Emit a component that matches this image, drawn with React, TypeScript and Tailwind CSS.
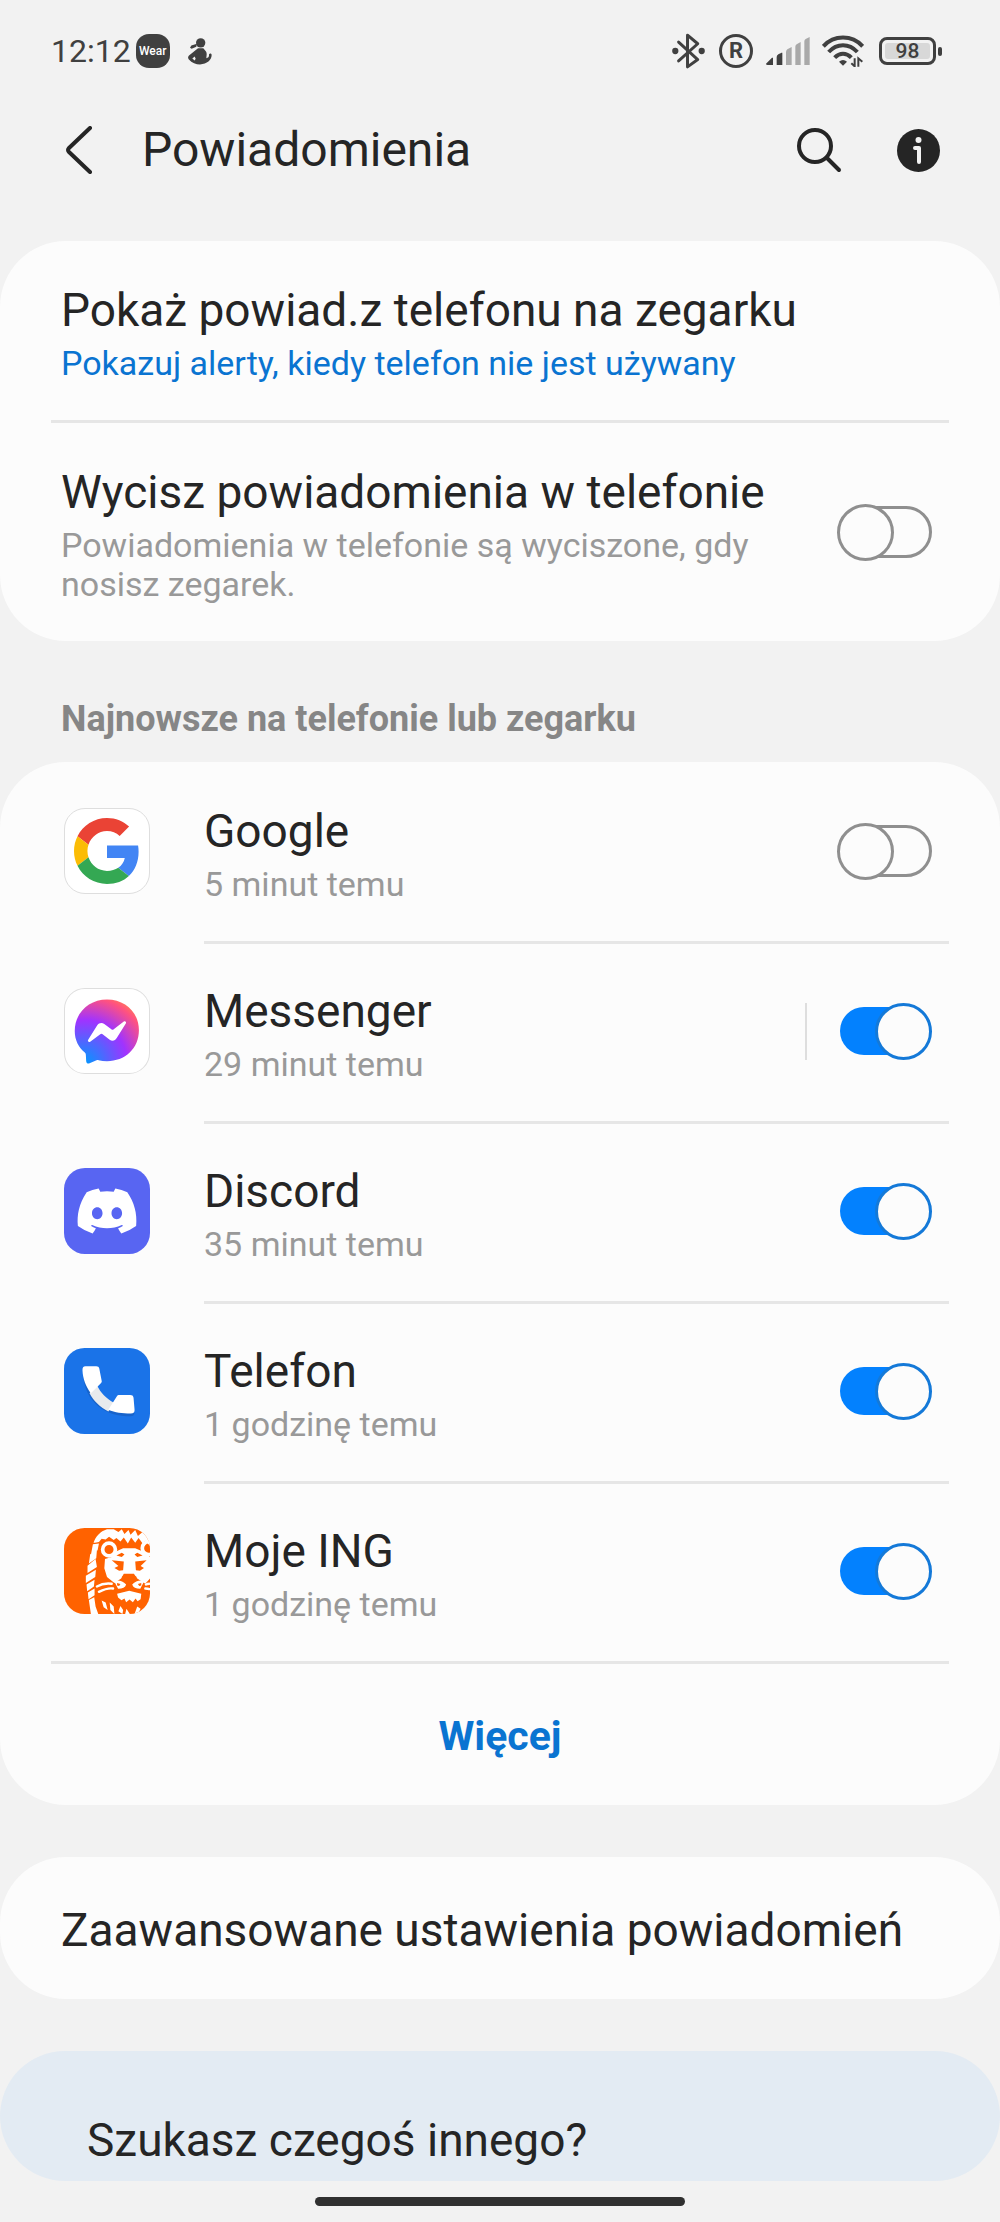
import type { ReactNode } from 'react';
import { FaDiscord } from 'react-icons/fa6';

type AppEntry = {
  name: string;
  time: string;
  icon: ReactNode;
  enabled: boolean;
  hasDetails?: boolean;
};

function GoogleIcon() {
  return (
    <span className="flex size-[86px] items-center justify-center rounded-[21px] border border-[#dedede] bg-white">
      <svg viewBox="0 0 48 48" className="size-[66px]" aria-hidden="true">
        <path fill="#ea4335" d="M24 9.5c3.54 0 6.71 1.22 9.21 3.6l6.85-6.85C35.9 2.38 30.47 0 24 0 14.62 0 6.51 5.38 2.56 13.22l7.98 6.19C12.43 13.72 17.74 9.5 24 9.5z" />
        <path fill="#4285f4" d="M46.98 24.55c0-1.57-.15-3.09-.38-4.55H24v9.02h12.94c-.58 2.96-2.26 5.48-4.78 7.18l7.73 6c4.51-4.18 7.09-10.36 7.09-17.65z" />
        <path fill="#fbbc05" d="M10.53 28.59c-.48-1.45-.76-2.99-.76-4.59s.27-3.14.76-4.59l-7.98-6.19C.92 16.46 0 20.12 0 24c0 3.88.92 7.54 2.56 10.78l7.97-6.19z" />
        <path fill="#34a853" d="M24 48c6.48 0 11.93-2.13 15.89-5.81l-7.73-6c-2.15 1.45-4.92 2.3-8.16 2.3-6.26 0-11.57-4.22-13.47-9.91l-7.98 6.19C6.51 42.62 14.62 48 24 48z" />
      </svg>
    </span>
  );
}

function MessengerIcon() {
  return (
    <svg viewBox="0 0 256 256" className="size-[86px]" aria-hidden="true">
      <defs>
        <radialGradient id="messenger" cx="60" cy="224" r="215" gradientUnits="userSpaceOnUse">
          <stop offset="0" stopColor="#0099ff" />
          <stop offset="0.6" stopColor="#a033ff" />
          <stop offset="0.92" stopColor="#ff5280" />
          <stop offset="1" stopColor="#ff7061" />
        </radialGradient>
      </defs>
      <rect x="1.5" y="1.5" width="253" height="253" rx="61" fill="#fff" stroke="#dedede" strokeWidth="3" />
      <path
        fill="url(#messenger)"
        d="M128 34C74 34 32 74 32 128c0 27 11 48 30 64 2 2 3 4 3 7l1 18c0 6 5 9 10 7l21-9c2-1 4-1 6 0 8 2 16 3 25 3 54 0 95-38 95-92S182 34 128 34z"
      />
      <path
        fill="#fff"
        d="M72 154l27-43c5-8 14-9 21-4l21 16c2 2 5 2 7 0l30-23c4-3 9 2 6 6l-27 43c-4 8-14 10-21 5l-21-16c-2-2-5-2-7 0l-30 22c-4 3-9-2-6-6z"
      />
    </svg>
  );
}

function DiscordIcon() {
  return (
    <span className="flex size-[86px] items-center justify-center rounded-[21px] bg-[#5865f2] text-white">
      <FaDiscord className="size-[64px]" aria-hidden="true" />
    </span>
  );
}

function PhoneIcon() {
  return (
    <svg viewBox="0 0 256 256" className="size-[86px]" aria-hidden="true">
      <rect width="256" height="256" rx="61" fill="#1a73e8" />
      <path
        fill="#1558b8"
        opacity="0.6"
        d="M57 76c2 74 54 124 128 127h13c7 0 11-3 12-9l-70-14-50-50z"
      />
      <path fill="#e8eaed" d="M76 135l22-24c12 24 26 38 52 53l-18 25c-24-13-43-29-56-54z" />
      <path fill="#fff" d="M64 54h32c5 0 8 2 9 7l7 36c1 4 0 6-3 9l-29 29c-15-21-24-43-25-69 0-8 2-12 9-12z" />
      <path fill="#fff" d="M132 184l25-40c2-3 4-4 8-4h32c6 0 9 2 10 8l3 35c1 8-3 12-11 12-26 0-47-2-67-11z" />
    </svg>
  );
}

function LionIcon() {
  return (
    <svg viewBox="0 0 256 256" className="size-[86px]" aria-hidden="true">
      <defs>
        <clipPath id="lion-tile">
          <rect width="256" height="256" rx="61" />
        </clipPath>
      </defs>
      <g clipPath="url(#lion-tile)">
        <rect width="256" height="256" fill="#ff6200" />
        {/* crown of the mane */}
        <path
          fill="#fff"
          d="M88 44c6-18 20-34 40-40l20 0 14 8 10-8 8 14 12-12 6 14 14-14 8 18 14-12c10 8 18 18 24 32v12l-16-18-8 8-12-16-10 14-12-16-10 18-12-18-10 12-12-10-8 6-14-10-10 8-12-2-8 10-12 2z"
        />
        {/* locks down the left side */}
        <path
          fill="#fff"
          d="M86 48l18-2-4 20-20 14zM78 78l20-12-2 24-22 16zM70 112l24-20 4 24-28 18zM65 142l30-18-2 22-28 18zM67 168l24-14-2 20-20 14zM71 192l20-12v20l-18 12zM74 214l16-8 4 28 8 22H80z"
        />
        {/* ears */}
        <circle cx="134" cy="64" r="19" fill="none" stroke="#fff" strokeWidth="11" />
        <circle cx="252" cy="60" r="19" fill="none" stroke="#fff" strokeWidth="11" />
        {/* face */}
        <path
          fill="#fff"
          d="M122 92l20-6 8-14 26-12h36l28 12 16 14v64l-14 16-24-16-10-14h-30l-8 14-20 14-22-18-8-26z"
        />
        <g fill="#ff6200">
          <path d="M142 96l36 4-2 26-12 1-14-8 12-6zM246 96l-34 4 2 26 12 1 12-8-10-6z" />
          <path d="M156 82l16-8 8 5-8 7zM234 82l-16-8-8 5 8 7z" />
          <path d="M172 145q22-12 44 0-2 14-16 20l-2 18h-8l-2-18q-14-6-16-20z" />
        </g>
        {/* muzzle and beard */}
        <path fill="#fff" d="M149 158q20-6 36 10-4 13-24 13zM239 158q-20-6-36 10 4 13 24 13z" />
        <path fill="#ff6200" d="M158 164l10 3-4 6-6-2zM230 164l-10 3 4 6 6-2z" />
        <path fill="#fff" d="M158 196l36-9 36 9-2 16-9 6-6-8-8 11-10-8-10 8-5-11-9 5-10-8z" />
        <g fill="none" stroke="#fff" strokeWidth="7" strokeLinecap="round">
          <path d="M98 174c14-8 28-10 44-8M104 190c16-8 28-12 42-10M254 166c-4 0-6 0-10 2M254 182c-4-2-8-2-12-2" />
        </g>
        <path fill="#fff" d="M112 216l12 6 6 22-12-8zM136 222l12 12 2 22-12-12zM168 232l8 12-2 12-12-8zM186 240l10 16h-14zM218 234l10 6-8 16h-10z" />
      </g>
    </svg>
  );
}

const APPS: AppEntry[] = [
  { name: 'Google', time: '5 minut temu', icon: <GoogleIcon />, enabled: false },
  { name: 'Messenger', time: '29 minut temu', icon: <MessengerIcon />, enabled: true, hasDetails: true },
  { name: 'Discord', time: '35 minut temu', icon: <DiscordIcon />, enabled: true },
  { name: 'Telefon', time: '1 godzinę temu', icon: <PhoneIcon />, enabled: true },
  { name: 'Moje ING', time: '1 godzinę temu', icon: <LionIcon />, enabled: true },
];

function Toggle({ label, on = false }: { label: string; on?: boolean }) {
  return (
    <label className="grid w-[95px] shrink-0 cursor-pointer items-center">
      <input type="checkbox" role="switch" aria-label={label} defaultChecked={on} className="peer col-start-1 row-start-1 h-[57px] w-full appearance-none" />
      <span className="col-start-1 row-start-1 ml-[3px] h-[52px] rounded-full border-3 border-[#8f8f8f] peer-checked:mr-1 peer-checked:h-[48px] peer-checked:border-0 peer-checked:bg-[#0381fe]" />
      <span className="col-start-1 row-start-1 size-[57px] rounded-full border-3 border-[#8f8f8f] bg-[#fcfcfc] peer-checked:justify-self-end peer-checked:border-[#1479d8]" />
    </label>
  );
}

function StatusBar() {
  return (
    <div className="flex h-[102px] items-center pr-[58px] pl-[51px] text-[#404040]">
      <span className="text-[32px] leading-10">12:12</span>
      <span className="ml-[5px] flex size-[34px] items-center justify-center rounded-[13px] bg-[#404040] text-[12px] font-medium text-white">
        Wear
      </span>
      <svg viewBox="0 0 72 80" className="ml-[18px] h-[27px] w-[24px]" fill="currentColor" aria-hidden="true">
        <circle cx="38" cy="14" r="14" />
        <path d="M27 17l-17 5-4 7 5 3 14-6zM30 30h16l8 10c4 6 1 14 1 20 6-1 9-5 8-12 3-3 7-2 8 2 0 16-14 28-35 29-12 0-24-5-34-16-3-4-2-8 1-11zM20 55l-7 6 7 6 3-5z" fillRule="evenodd" />
      </svg>

      <div className="ml-auto flex items-center">
        <svg viewBox="0 0 100 108" className="h-[36px] w-[33px]" fill="none" stroke="currentColor" strokeWidth="9" strokeLinejoin="round" strokeLinecap="round" aria-hidden="true">
          <path d="M20 27l58 53-31 22V6l31 26-58 52" />
          <circle cx="10" cy="54" r="5" fill="currentColor" />
          <circle cx="90" cy="54" r="5" fill="currentColor" />
        </svg>
        <span className="ml-[14px] flex size-[34px] items-center justify-center rounded-full border-3 border-current text-[22px] leading-none font-bold">
          R
        </span>
        <svg viewBox="0 0 132 87" className="ml-[13px] h-[29px] w-[44px]" fill="currentColor" aria-hidden="true">
          <path d="M0 80l18-18h3v22H5q-5 0-5-4zM32 60q0-5 5-8l10-5q2-1 2 2v35H32z" />
          <path fill="#a9a9a9" d="M60 45q0-5 4-8l13-7v54H60zM88 29q0-5 4-7l12-7v69H88zM115 13q0-5 4-7l12-6v84h-16z" />
        </svg>
        <svg viewBox="0 0 126 96" className="ml-[12px] h-[32px] w-[42px]" fill="none" stroke="currentColor" strokeWidth="12" aria-hidden="true">
          <path d="M4 34C36-1 90-1 122 34M20 51c25-27 61-27 86 0M38 68c15-16 35-16 50 0" />
          <path d="M63 92L51 80q12-10 24 0z" fill="currentColor" stroke="none" />
          <path d="M98 70v24l-10-9M109 95V70l12 10" strokeWidth="6" />
        </svg>
        <span className="ml-[15px] flex h-[28px] w-[57px] rounded-[8px] border-3 border-current p-[3px]">
          <span className="flex grow items-center justify-center rounded-[3px] bg-[#d8d8d8] text-[21px] leading-none font-medium">98</span>
        </span>
        <span className="ml-[2px] h-[9px] w-[4px] rounded-full bg-current" />
      </div>
    </div>
  );
}

function Header() {
  return (
    <header className="flex h-[96px] items-center pr-[60px] pl-[64px]">
      <button type="button" aria-label="Wstecz">
        <svg viewBox="0 0 30 48" className="h-[48px] w-[30px]" fill="none" stroke="currentColor" strokeWidth="4" strokeLinecap="round" strokeLinejoin="round" aria-hidden="true">
          <path d="M26 2L5 22q-2 2 0 4l21 20" />
        </svg>
      </button>
      <h1 className="ml-12 text-[48px] leading-[60px]">Powiadomienia</h1>
      <button type="button" aria-label="Szukaj" className="ml-auto">
        <svg viewBox="0 0 46 46" className="size-[46px]" fill="none" stroke="currentColor" strokeWidth="4" strokeLinecap="round" aria-hidden="true">
          <circle cx="19" cy="19" r="16" />
          <path d="M31 31l12 12" />
        </svg>
      </button>
      <button type="button" aria-label="Informacje" className="ml-[55px]">
        <svg viewBox="0 0 43 43" className="size-[43px]" aria-hidden="true">
          <circle cx="21.5" cy="21.5" r="21.5" fill="currentColor" />
          <circle cx="21.5" cy="11" r="3" fill="#f2f2f2" />
          <path d="M18 19h4v14" fill="none" stroke="#f2f2f2" strokeWidth="4" strokeLinecap="round" strokeLinejoin="round" />
        </svg>
      </button>
    </header>
  );
}

export default function App() {
  return (
    <div className="flex min-h-screen flex-col bg-[#f2f2f2] font-[Roboto,sans-serif] text-[#252525]">
      <StatusBar />
      <Header />

      <main className="mt-[43px]">
        <section className="rounded-[66px] bg-[#fcfcfc] px-[51px]">
          <a href="#alerts" className="block h-[182px] border-b-3 border-[#e6e6e6] px-[10px] pt-[39px]">
            <span className="block text-[46px] leading-[60px]">Pokaż powiad.z telefonu na zegarku</span>
            <span className="mt-1 block text-[34px] leading-[39px] text-[#0a74d1]">Pokazuj alerty, kiedy telefon nie jest używany</span>
          </a>
          <div className="flex h-[218px] items-center justify-between pr-[17px] pl-[10px]">
            <div className="pt-[2px]">
              <h2 className="text-[46px] leading-[60px]">Wycisz powiadomienia w telefonie</h2>
              <p className="mt-1 max-w-[700px] text-[34px] leading-[39px] text-[#999999]">
                Powiadomienia w telefonie są wyciszone, gdy nosisz zegarek.
              </p>
            </div>
            <Toggle label="Wycisz powiadomienia w telefonie" />
          </div>
        </section>

        <h2 className="px-[61px] pt-[58px] pb-[23px] text-[36px] leading-10 font-bold text-[#868686]">
          Najnowsze na telefonie lub zegarku
        </h2>

        <section className="rounded-[66px] bg-[#fcfcfc] px-[51px] pt-[2px]">
          <ul className="border-b-3 border-[#e6e6e6]">
            {APPS.map((app, i) => (
              <li key={app.name} className="flex pl-[13px]">
                <div className="flex h-[177px] w-[140px] shrink-0 items-center pb-[3px]">{app.icon}</div>
                <div className={`flex grow items-center justify-between pr-[17px] ${i < APPS.length - 1 ? 'h-[180px] border-b-3 border-[#e6e6e6]' : 'h-[177px]'}`}>
                  <div>
                    <h3 className="text-[46px] leading-[60px]">{app.name}</h3>
                    <p className="mt-1 text-[34px] leading-[39px] text-[#999999]">{app.time}</p>
                  </div>
                  <div className="flex items-center gap-[30px] pb-[3px]">
                    {app.hasDetails && <span className="h-[57px] w-[2px] bg-[#dedede]" />}
                    <Toggle label={app.name} on={app.enabled} />
                  </div>
                </div>
              </li>
            ))}
          </ul>
          <button type="button" className="flex h-[141px] w-full items-center justify-center pt-[3px] text-[41px] leading-[60px] font-bold text-[#0a74d1]">
            Więcej
          </button>
        </section>

        <a href="#advanced" className="mt-[52px] flex h-[142px] items-center rounded-[66px] bg-[#fcfcfc] px-[61px] pt-[3px] text-[46px] leading-[60px]">
          Zaawansowane ustawienia powiadomień
        </a>

        <section className="mt-[52px] h-[130px] rounded-[66px] bg-[#e3ebf3] px-[87px] pt-[59px]">
          <h2 className="text-[46px] leading-[60px]">Szukasz czegoś innego?</h2>
        </section>
      </main>

      <div className="mx-auto mt-auto mb-4 h-[9px] w-[370px] rounded-full bg-[#303030]" />
    </div>
  );
}
